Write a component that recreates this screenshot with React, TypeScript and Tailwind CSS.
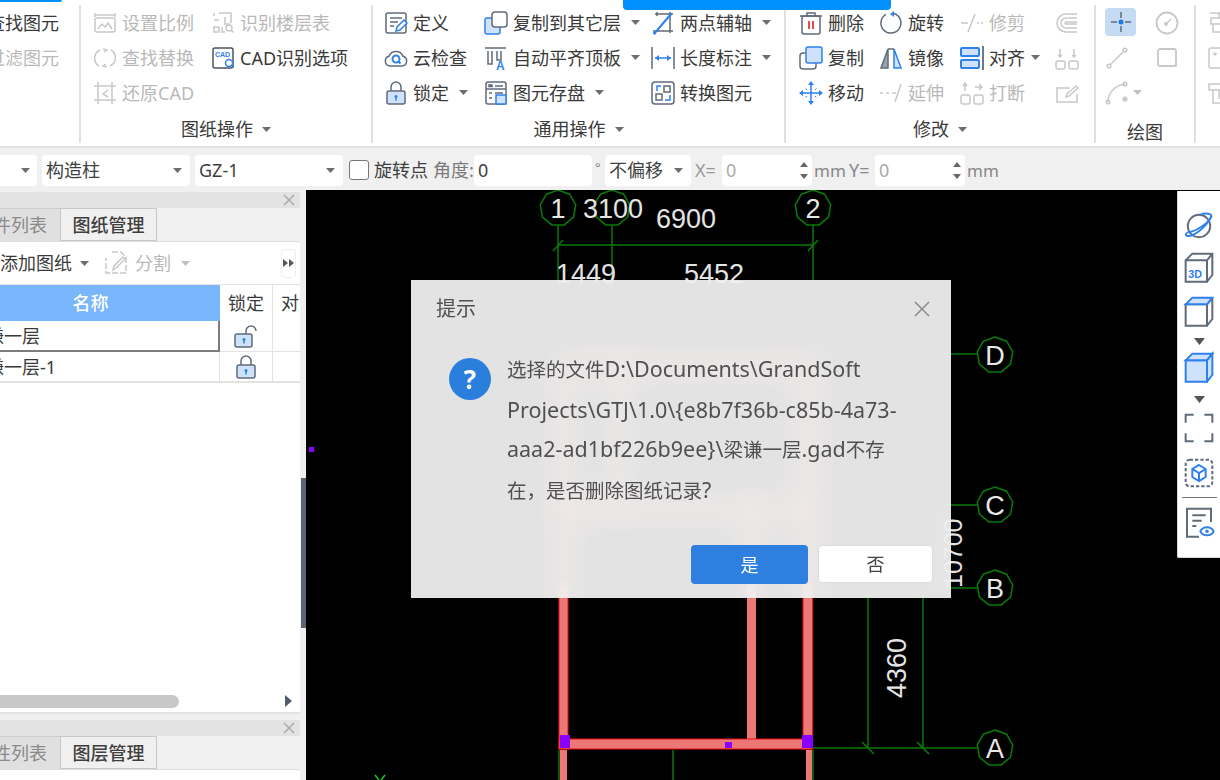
import type { ReactNode } from "react"

const G = "#5f6b7a"
const B = "#2f80ed"
const L = "#cfe2fb"
const D = "#c8c8c8"

function Ico({ children, size = 24 }: { children: ReactNode; size?: number }) {
  return (
    <svg viewBox="0 0 24 24" width={size} height={size} fill="none" stroke={G} strokeWidth={1.5} className="shrink-0">
      {children}
    </svg>
  )
}

function Caret({ muted }: { muted?: boolean }) {
  return (
    <svg width="9" height="5" viewBox="0 0 9 5" className="shrink-0">
      <path d="M0 0h9L4.5 5z" fill={muted ? "#c0c0c0" : "#6d6d6d"} />
    </svg>
  )
}

function Tool({ icon, label, caret, off, gap }: { icon?: ReactNode; label?: string; caret?: boolean; off?: boolean; gap?: string }) {
  return (
    <div className={`flex items-center h-[35px] gap-[5px] whitespace-nowrap ${off ? "text-[#b9b9b9]" : "text-[#3a3a3a]"}`}>
      {icon}
      {label && <span>{label}</span>}
      {caret && <span className={gap ?? "ml-[5px]"}><Caret muted={off} /></span>}
    </div>
  )
}

const icons = {
  scale: (
    <Ico><g stroke={D}><path d="M2 2v4M22 2v4M2 4h20" /><rect x="2" y="7" width="20" height="14" rx="2" /><path d="M5 18l4-5 3 3 3-4 4 6" /></g></Ico>
  ),
  floors: (
    <Ico><g stroke={D}><path d="M3 2v3M8 2h12v10M3 9h5M3 16v5h5v-5zM11 16v5h3M14 6v7h5" /><circle cx="18" cy="17" r="3" /><path d="M20 19l2.500 2.500" /></g></Ico>
  ),
  replace: (
    <Ico><g stroke={D}><path d="M7 4a9 9 0 0 0-1 16M17 20a9 9 0 0 0 1-16" /><path d="M10 3l4 1-3 2M14 21l-4-1 3-2" /></g></Ico>
  ),
  cadOpt: (
    <Ico>
      <rect x="2" y="2" width="20" height="20" rx="2" stroke="#4a5563" />
      <text x="4" y="11" fontSize="7" fontWeight="700" fill={B} stroke="none" fontFamily="Liberation Sans">CAD</text>
      <circle cx="18" cy="17" r="3.500" stroke={B} fill="#fff" />
      <path d="M20.500 19.500l2 2" stroke={B} />
    </Ico>
  ),
  restore: (
    <Ico><g stroke={D}><path d="M5 1v22M19 1v22M1 5h22M1 19h22" /><path d="M15 9l-5 4 5 3" /></g></Ico>
  ),
  define: (
    <Ico>
      <rect x="2" y="2" width="20" height="20" rx="2" />
      <path d="M6 7h12M6 11h8M6 15h4" />
      <path d="M12 20l1-4 7-7 3 3-7 7z" fill="#fff" stroke={B} />
    </Ico>
  ),
  copyTo: (
    <Ico>
      <rect x="1" y="7" width="15" height="16" rx="2" fill={L} stroke={B} />
      <rect x="8" y="1" width="15" height="15" rx="3" fill="#fff" />
    </Ico>
  ),
  twoAxis: (
    <Ico>
      <path d="M4 3h18M2 20h20M6 1v4M19 1v21" />
      <path d="M3 23L20 3" stroke={B} strokeWidth={2} />
      <circle cx="3.500" cy="22" r="1.500" fill={B} stroke="none" />
      <circle cx="19.500" cy="3" r="1.500" fill={B} stroke="none" />
    </Ico>
  ),
  cloud: (
    <Ico>
      <path d="M6 20a5 5 0 0 1-1-9.800 7.500 7.500 0 0 1 14 0A5 5 0 0 1 18 20z" />
      <circle cx="12" cy="13" r="3.500" stroke={B} strokeWidth={2} />
      <path d="M14.500 15.500l2 2" stroke={B} strokeWidth={2} />
    </Ico>
  ),
  autoAlign: (
    <Ico>
      <path d="M1 2h21M4 5v13h4V5M13 5v9h4V5" />
      <text x="12" y="24" fontSize="12" fontWeight="700" fill={B} stroke="none" fontFamily="Liberation Sans">A</text>
    </Ico>
  ),
  length: (
    <Ico>
      <path d="M1 1v22M23 1v22" />
      <path d="M4 12h16" stroke={B} />
      <path d="M4 12l4-3v6zM20 12l-4-3v6z" fill={B} stroke="none" />
    </Ico>
  ),
  lock: (
    <Ico>
      <path d="M7 10V6a5 5 0 0 1 10 0v4" />
      <rect x="3" y="10" width="18" height="13" rx="2" fill={L} />
      <circle cx="12" cy="15.500" r="1.500" fill={B} stroke="none" />
      <path d="M12 16v3.500" stroke={B} />
    </Ico>
  ),
  unlock: (
    <Ico>
      <path d="M13 10V7a5 5 0 0 1 10 0" transform="translate(-1 0)" />
      <rect x="1" y="10" width="17" height="13" rx="2" fill={L} />
      <circle cx="10" cy="15.500" r="1.500" fill={B} stroke="none" />
      <path d="M10 16v3.500" stroke={B} />
    </Ico>
  ),
  save: (
    <Ico>
      <rect x="2" y="1" width="20" height="22" rx="2" />
      <path d="M2 8h20" />
      <rect x="5" y="4" width="3" height="1.500" /><path d="M11 5h8M5 12h3M5 17h3M11 12h8" />
      <rect x="12" y="14" width="10" height="9" fill={L} stroke={B} />
    </Ico>
  ),
  convert: (
    <Ico>
      <rect x="1" y="1" width="22" height="22" rx="3" />
      <rect x="5" y="13" width="6" height="6" /><rect x="13" y="5" width="6" height="6" />
      <path d="M10 5H6v5M14 19h5v-5" stroke={B} />
    </Ico>
  ),
  del: (
    <Ico>
      <path d="M1 5h22M8 5V2h8v3" />
      <rect x="3" y="5" width="18" height="18" rx="2" />
      <path d="M10 10v8M14 10v8" stroke="#e53935" strokeWidth={1.800} />
    </Ico>
  ),
  rotate: (
    <Ico>
      <path d="M15 2.500A10 10 0 1 1 7 3.300" />
      <path d="M15 0v6l-4-3z" fill={B} stroke="none" />
    </Ico>
  ),
  trim: (
    <Ico><g stroke={D}><path d="M1 12h7M8 21L15 3M17 12h2M21 12h2" /></g></Ico>
  ),
  offset: (
    <Ico><g stroke={D}><path d="M22 3H11a9 9 0 0 0 0 18h11M22 7H11a5 5 0 0 0 0 10h11M22 11H11a1 1 0 0 0 0 2h11" /></g></Ico>
  ),
  copy: (
    <Ico>
      <rect x="1" y="7" width="16" height="16" rx="3" />
      <rect x="7" y="1" width="16" height="16" rx="2" fill={L} stroke={B} />
    </Ico>
  ),
  mirror: (
    <Ico>
      <path d="M9 3L2 22h7z" fill="#9aa4b0" />
      <path d="M15 3l7 19h-7z" fill={L} stroke={B} />
      <path d="M9 3h6" />
    </Ico>
  ),
  align: (
    <Ico>
      <rect x="1" y="2" width="18" height="8" rx="1" fill={L} stroke={B} strokeWidth={2} />
      <rect x="1" y="14" width="18" height="8" rx="1" fill={L} stroke={B} strokeWidth={2} />
      <path d="M23 0v24" strokeWidth={1.800} />
    </Ico>
  ),
  merge: (
    <Ico><g stroke={D}><rect x="1" y="15" width="9" height="8" rx="2" /><rect x="14" y="15" width="9" height="8" rx="2" /><path d="M5 3v8M3 9l2 2 2-2M19 3v8M17 9l2 2 2-2" /></g></Ico>
  ),
  move: (
    <Ico>
      <path d="M12 3v18M3 12h18" stroke={B} />
      <path d="M12 0l3 4H9zM12 24l3-4H9zM0 12l4-3v6zM24 12l-4-3v6z" fill={B} stroke="none" />
      <path d="M8 9L6 7M16 9l2-2M8 15l-2 2M16 15l2 2" stroke={B} strokeWidth={1} strokeDasharray="2 1" />
    </Ico>
  ),
  extend: (
    <Ico><g stroke={D}><path d="M1 12h3M7 12h3M13 12h4M16 21L22 3" /></g></Ico>
  ),
  breakIcon: (
    <Ico><g stroke={D}><rect x="1" y="14" width="9" height="9" rx="2" /><rect x="14" y="14" width="9" height="9" rx="2" /><path d="M5 2v8M3 5l2-3 2 3M15 6h7M19 3l3 3-3 3" /></g></Ico>
  ),
  edit: (
    <Ico><g stroke={D}><path d="M22 13v8H2V7h13" /><path d="M11 16l1-3 9-8 2 2-9 8z" /></g></Ico>
  ),
  snap: (
    <Ico>
      <path d="M12 2v6M12 16v6M2 12h6M16 12h6" />
      <circle cx="12" cy="12" r="2.500" fill="#2277e6" stroke="none" />
    </Ico>
  ),
  gauge: (
    <Ico><g stroke={D}><circle cx="12" cy="12" r="10.500" strokeWidth={1.800} /><path d="M11 13l5-5" /><circle cx="11" cy="13" r="1.200" fill={D} /></g></Ico>
  ),
  line: (
    <Ico><g stroke={D}><path d="M5 19L19 5" /><circle cx="4" cy="20" r="1.800" /><circle cx="20" cy="4" r="1.800" /></g></Ico>
  ),
  rect: (
    <Ico><g stroke={D}><rect x="3" y="3" width="18" height="17" rx="2" strokeWidth={1.800} /><path d="M19 20h2v-2" /></g></Ico>
  ),
  arc: (
    <Ico><g stroke={D}><path d="M3 21C3 12 10 4 20 3" /><circle cx="3" cy="21" r="1.800" /><circle cx="20" cy="3" r="1.800" /><circle cx="20" cy="18" r="1.800" fill={D} /></g></Ico>
  ),
  side1: (
    <Ico><g stroke={D}><path d="M3 2h18M12 2v5M4 7h16v6H4zM6 13v8h12v-8" /></g></Ico>
  ),
  side2: (
    <Ico><g stroke={D}><rect x="2" y="2" width="20" height="20" rx="2" /><circle cx="8" cy="8" r="1" /><circle cx="17" cy="17" r="1" /></g></Ico>
  ),
  side3: (
    <Ico><g stroke={D}><path d="M2 3h20v6H2zM6 9v13h12M12 9v9" /></g></Ico>
  ),
}

function Group({ title, width, className, children, shift }: { title?: string; width: string; className?: string; children: ReactNode; shift?: boolean }) {
  return (
    <div className={`${width} shrink-0 flex flex-col mt-[5px] mb-[3px] border-r-2 border-[#e0e0e0] overflow-hidden`}>
      <div className={`h-[105px] ${className ?? ""}`}>{children}</div>
      {title && (
        <div className={`flex items-center justify-center gap-[9px] text-[#3a3a3a] ${shift ? "mt-[13px]" : "mt-[10px]"}`}>
          <span>{title}</span>
          {!shift && <Caret />}
        </div>
      )}
    </div>
  )
}

function Ribbon() {
  return (
    <div className="h-[148px] bg-white flex border-b-2 border-[#e3e3e3] text-[18px] leading-none">
      <Group width="w-[81px]" className="flex flex-col items-end pr-[20px]">
        <Tool label="查找图元" />
        <Tool label="过滤图元" off />
      </Group>
      <Group title="图纸操作" width="w-[292px]" className="pl-[12px] grid grid-cols-[118px_1fr] grid-rows-[35px_35px_35px]">
        <Tool icon={icons.scale} label="设置比例" off />
        <Tool icon={icons.floors} label="识别楼层表" off />
        <Tool icon={icons.replace} label="查找替换" off />
        <Tool icon={icons.cadOpt} label="CAD识别选项" />
        <Tool icon={icons.restore} label="还原CAD" off />
      </Group>
      <Group title="通用操作" width="w-[413px]" className="pl-[11px] grid grid-cols-[100px_167px_1fr] grid-rows-[35px_35px_35px]">
        <Tool icon={icons.define} label="定义" />
        <Tool icon={icons.copyTo} label="复制到其它层" caret />
        <Tool icon={icons.twoAxis} label="两点辅轴" caret />
        <Tool icon={icons.cloud} label="云检查" />
        <Tool icon={icons.autoAlign} label="自动平齐顶板" caret />
        <Tool icon={icons.length} label="长度标注" caret />
        <Tool icon={icons.lock} label="锁定" caret />
        <Tool icon={icons.save} label="图元存盘" caret />
        <Tool icon={icons.convert} label="转换图元" />
      </Group>
      <Group title="修改" width="w-[310px]" className="pl-[13px] grid grid-cols-[80px_81px_95px_1fr] grid-rows-[35px_35px_35px]">
        <Tool icon={icons.del} label="删除" />
        <Tool icon={icons.rotate} label="旋转" />
        <Tool icon={icons.trim} label="修剪" off />
        <Tool icon={icons.offset} off />
        <Tool icon={icons.copy} label="复制" />
        <Tool icon={icons.mirror} label="镜像" />
        <Tool icon={icons.align} label="对齐" caret gap="ml-[1px]" />
        <Tool icon={icons.merge} off />
        <Tool icon={icons.move} label="移动" />
        <Tool icon={icons.extend} label="延伸" off />
        <Tool icon={icons.breakIcon} label="打断" off />
        <Tool icon={icons.edit} off />
      </Group>
      <Group title="绘图" shift width="w-[100px]" className="pl-[9px] grid grid-cols-[50px_1fr] grid-rows-[35px_35px_35px]">
        <div className="w-[31px] h-[28px] mt-[3px] rounded-[4px] bg-[#c4dbf3] flex items-center justify-center">{icons.snap}</div>
        <Tool icon={icons.gauge} />
        <Tool icon={icons.line} />
        <Tool icon={icons.rect} />
        <Tool icon={icons.arc} caret gap="-ml-[1px]" off />
      </Group>
      <div className="pl-[11px] pt-[5px] flex flex-col">
        <Tool icon={icons.side1} />
        <Tool icon={icons.side2} />
        <Tool icon={icons.side3} />
      </div>
    </div>
  )
}

function Field({ className, children }: { className: string; children?: ReactNode }) {
  return <div className={`h-[31px] bg-white rounded-[4px] flex items-center px-[4px] shrink-0 ${className}`}>{children}</div>
}

function Spin() {
  return (
    <div className="ml-auto flex flex-col gap-[7px]">
      <svg width="8" height="5"><path d="M0 5h8L4 0z" fill="#666" /></svg>
      <svg width="8" height="5"><path d="M0 0h8L4 5z" fill="#666" /></svg>
    </div>
  )
}

function OptionBar() {
  return (
    <div className="h-[42px] bg-[#f0f0f0] flex items-center text-[18px] text-[#3f3f3f] leading-none -ml-[6px] pt-[2px]">
      <Field className="w-[43px] justify-end pr-[7px] ml-0"><Caret /></Field>
      <Field className="w-[148px] ml-[5px] justify-between pr-[8px]"><span>构造柱</span><Caret /></Field>
      <Field className="w-[148px] ml-[5px] justify-between pr-[8px]"><span>GZ-1</span><Caret /></Field>
      <div className="w-[20px] h-[20px] ml-[6px] bg-white border border-[#777] rounded-[3px] shrink-0" />
      <span className="ml-[5px] w-[55px] whitespace-nowrap">旋转点</span>
      <span className="ml-[4px] w-[40px] whitespace-nowrap text-[#7a7a7a]">角度:</span>
      <Field className="w-[118px] ml-[1px]">0</Field>
      <span className="ml-[3px] text-[#888] text-[13px] -mt-[6px] w-[10px]">°</span>
      <Field className="w-[86px] justify-between pr-[8px]"><span>不偏移</span><Caret /></Field>
      <span className="w-[31px] pl-[4px] whitespace-nowrap text-[#999]">X=</span>
      <Field className="w-[90px] text-[#aaa]">0<Spin /></Field>
      <span className="w-[37px] pl-[2px] text-[17px] whitespace-nowrap text-[#888]">mm</span>
      <span className="w-[26px] whitespace-nowrap text-[#888]">Y=</span>
      <Field className="w-[90px] text-[#aaa]">0<Spin /></Field>
      <span className="ml-[2px] text-[17px] text-[#888]">mm</span>
    </div>
  )
}

function PanelHead({ first, second }: { first: string; second: string }) {
  return (
    <>
      <div className="h-[16px] bg-[#e3e3e3] flex items-center justify-end pr-[4px] shrink-0">
        <svg width="14" height="14" viewBox="0 0 14 14"><path d="M2 2l10 10M12 2L2 12" stroke="#aaa" strokeWidth="1.500" /></svg>
      </div>
      <div className="h-[34px] bg-[#f0f0f0] flex border-b border-[#ddd] shrink-0 text-[18px] leading-none">
        <div className="w-[60px] bg-[#e0e0e0] border-t border-[#ccc] flex items-center justify-end pr-[13px] text-[#8a8a8a] whitespace-nowrap overflow-hidden">{first}</div>
        <div className="w-[97px] bg-[#f0f0f0] border border-[#c8c8c8] flex items-center justify-center font-medium text-[#3f3f3f]">{second}</div>
      </div>
    </>
  )
}

function LeftPanel() {
  return (
    <div className="w-[306px] shrink-0 flex flex-col bg-[#f0f0f0] relative">
      <div className="h-[522px] w-[300px] bg-white flex flex-col mt-[2px] border-b-2 border-[#e3e3e3] text-[18px] leading-none shrink-0">
        <PanelHead first="构件列表" second="图纸管理" />
        <div className="h-[42px] flex items-center shrink-0 text-[#3a3a3a] pr-[4px]">
          <span className="whitespace-nowrap">添加图纸</span>
          <span className="ml-[8px]"><Caret /></span>
          <span className="ml-[15px]">
            <Ico><g stroke={D}><path d="M8 1h9l5 5v16H2V7" strokeDasharray="6 2" /><path d="M9 19l1-4 9-9 2 2-9 9z" /></g></Ico>
          </span>
          <span className="ml-[7px] text-[#b9b9b9]">分割</span>
          <span className="ml-[10px]"><Caret muted /></span>
          <div className="ml-auto w-[15px] h-[29px] border border-[#eee] rounded-[4px] flex items-center justify-center">
            <svg width="11" height="8" viewBox="0 0 11 8"><path d="M0 0l5 4-5 4zM6 0l5 4-5 4z" fill="#555" /></svg>
          </div>
        </div>
        <div className="grid grid-cols-[220px_53px_1fr] border-t border-[#e3e3e3] shrink-0">
          <div className="h-[36px] bg-[#79b6fb] flex items-center justify-center text-white pr-[39px] font-medium">名称</div>
          <div className="h-[36px] flex items-center justify-center border-r border-[#e3e3e3] text-[#3a3a3a]">锁定</div>
          <div className="h-[36px] flex items-center pl-[8px] text-[#3a3a3a] overflow-hidden whitespace-nowrap">对</div>
          <div className="h-[31px] border-r-2 border-b-2 border-[#7d7d7d] flex items-center whitespace-nowrap text-[#3a3a3a] overflow-hidden"><span className="-ml-[32px]">梁谦一层</span></div>
          <div className="h-[31px] border-b border-r border-[#e3e3e3] flex items-center justify-center">{icons.unlock}</div>
          <div className="h-[31px] border-b border-[#e3e3e3]" />
          <div className="h-[31px] border-r border-b-2 border-[#e3e3e3] flex items-center whitespace-nowrap text-[#3a3a3a] overflow-hidden"><span className="-ml-[32px]">梁谦一层-1</span></div>
          <div className="h-[31px] border-b-2 border-r border-[#e3e3e3] flex items-center justify-center">{icons.lock}</div>
          <div className="h-[31px] border-b-2 border-[#e3e3e3]" />
        </div>
        <div className="mt-auto h-[14px] mb-[4px] flex items-center">
          <div className="w-[179px] h-[13px] bg-[#c8c8c8] rounded-r-full" />
          <svg width="7" height="12" viewBox="0 0 7 12" className="ml-auto mr-[8px]"><path d="M0 0l7 6-7 6z" fill="#525c6e" /></svg>
        </div>
      </div>
      <div className="mt-[6px] w-[300px] flex-1 bg-white flex flex-col">
        <PanelHead first="属性列表" second="图层管理" />
      </div>
      <div className="absolute right-0 top-[288px] w-[5px] h-[150px] bg-[#5d6570]" />
    </div>
  )
}

function Octagon({ x, y, t }: { x: number; y: number; t?: string }) {
  const r = 18
  const pts = [0, 1, 2, 3, 4, 5, 6, 7, 8]
    .map((i) => {
      const a = (Math.PI / 4.5) * i - Math.PI / 2
      return `${x + r * Math.cos(a)},${y + r * Math.sin(a)}`
    })
    .join(" ")
  return (
    <g>
      <polygon points={pts} fill="#000" stroke="#0a7a0a" strokeWidth="1.500" />
      {t && <text x={x} y={y + 10} textAnchor="middle" fontSize="27" fill="#e8e8e8" stroke="none" fontFamily="Liberation Sans">{t}</text>}
    </g>
  )
}

function Drawing() {
  const wall = "#ed7676"
  const green = "#0a7a0a"
  return (
    <svg viewBox="306 190 914 590" width="914" height="590" className="block">
      <rect x="306" y="190" width="914" height="590" fill="#000" />
      <g stroke={green} strokeWidth="1.500" fill="none">
        <path d="M558 208V300M612 208V300M813 208V300" />
        <path d="M558 245H813M553 251l10-11M808 251l10-11" />
        <path d="M800 354H977M800 505H977M800 588H977M812 748H977" />
        <path d="M868 590V748M923 590V748M862 742l12 12M917 742l12 12" />
        <path d="M673 750V780" />
        <path d="M559 750V780M813 750V780" />
      </g>
      <Octagon x={558} y={208} t="1" />
      <Octagon x={612} y={208} />
      <Octagon x={813} y={208} t="2" />
      <Octagon x={995} y={355} t="D" />
      <Octagon x={995} y={505} t="C" />
      <Octagon x={995} y={588} t="B" />
      <Octagon x={995} y={748} t="A" />
      <g fill="#e4e4e4" fontSize="27" fontFamily="Liberation Sans" stroke="none">
        <text x="583" y="218">3100</text>
        <text x="656" y="228">6900</text>
        <text x="556" y="283">1449</text>
        <text x="684" y="283">5452</text>
        <text transform="translate(906 698) rotate(-90)">4360</text>
        <text transform="translate(962 588) rotate(-90)" fontSize="25">10700</text>
      </g>
      {/* walls, continuing under the dialog so its backdrop picks them up */}
      <g fill={wall} stroke="#f01010" strokeWidth="1">
        <rect x="559" y="360" width="9" height="389" />
        <rect x="803" y="360" width="9.500" height="389" />
        <rect x="747" y="500" width="9" height="240" stroke="none" />
        <rect x="559" y="739" width="253" height="10" />
      </g>
      <g fill={wall}>
        <rect x="559" y="360" width="253" height="10" />
        <rect x="559" y="505" width="253" height="9" />
        <rect x="615" y="360" width="8" height="150" />
        <rect x="560" y="750" width="7" height="30" />
        <rect x="806" y="750" width="6" height="30" />
      </g>
      <g fill="#8a00ff">
        <rect x="560" y="735" width="10" height="13" />
        <rect x="802" y="735" width="11" height="13" />
        <rect x="725" y="742" width="7" height="6" />
        <rect x="309" y="447" width="5" height="5" />
      </g>
      <path d="M375 775l4 5M385 775l-4 5" stroke="#19c819" strokeWidth="1.500" />
    </svg>
  )
}

function SideBar() {
  return (
    <div className="absolute right-0 top-[1px] w-[43px] h-[367px] bg-white border-l border-b border-[#d8d8d8] rounded-bl-[2px] flex flex-col items-center">
      <div className="mt-[20px]">
        <Ico size={30}><ellipse cx="12" cy="12" rx="9" ry="9" /><path d="M3 17C8 17 20 10 22 4c-1-3-7-2-9-1" stroke={B} /><path d="M3 17c-2 1-2 3 0 3 5 0 14-6 19-16" stroke={B} /></Ico>
      </div>
      <div className="mt-[10px]">
        <Ico size={32}><path d="M2 7h16v16H2zM2 7l5-5h15v16l-4 5M18 7l4-5" /><text x="4" y="20" fontSize="8" fontWeight="700" fill={B} stroke="none" fontFamily="Liberation Sans">3D</text></Ico>
      </div>
      <div className="mt-[12px]">
        <Ico size={32}><path d="M2 7h16v16H2zM18 23l4-5V2M18 7l4-5" /><path d="M2 7l5-5h15l-4 5z" fill={L} stroke={B} /></Ico>
      </div>
      <div className="mt-[11px]"><svg width="11" height="7"><path d="M0 0h11L5.500 7z" fill="#555" /></svg></div>
      <div className="mt-[6px]">
        <Ico size={32}><g stroke={B}><path d="M2 7h16v16H2z" fill={L} /><path d="M2 7l5-5h15l-4 5z" fill={L} /><path d="M18 7l4-5v16l-4 5z" fill={L} /></g></Ico>
      </div>
      <div className="mt-[13px]"><svg width="11" height="7"><path d="M0 0h11L5.500 7z" fill="#555" /></svg></div>
      <div className="mt-[9px]">
        <Ico size={32}><path d="M8 2H2v6M16 2h6v6M2 16v6h6M22 16v6h-6" /></Ico>
      </div>
      <div className="mt-[13px]">
        <Ico size={32}><rect x="2" y="2" width="20" height="20" rx="3" strokeDasharray="2.500 1.500" /><path d="M12 6l5 3v6l-5 3-5-3V9zM7 9l5 3 5-3M12 12v6" stroke={B} /></Ico>
      </div>
      <div className="mt-[8px] w-[35px] border-t border-[#777]" />
      <div className="mt-[8px]">
        <Ico size={32}><path d="M21 12V2H3v21h9" /><path d="M7 7h10M7 11h7M7 15h3" /><path d="M13 19c2-4 8-4 10 0-2 4-8 4-10 0z" stroke={B} /><circle cx="18" cy="19" r="1.300" fill={B} stroke="none" /></Ico>
      </div>
    </div>
  )
}

function Cjk({ children }: { children: ReactNode }) {
  return <span className="text-[19.500px]">{children}</span>
}

function Dialog() {
  return (
    <div className="absolute left-[411px] top-[280px] w-[540px] h-[318px] bg-white/[0.89] backdrop-blur-[14px] flex flex-col text-[#505050] font-normal leading-none">
      <div className="h-[58px] flex items-center justify-between pl-[25px] pr-[20px] text-[20px]">
        <span>提示</span>
        <svg width="18" height="18" viewBox="0 0 18 18"><path d="M2 2l14 14M16 2L2 16" stroke="#8a8a8a" strokeWidth="1.500" /></svg>
      </div>
      <div className="flex pl-[38px] pt-[11px] gap-[16px] flex-1">
        <div className="w-[42px] h-[42px] mt-[9px] rounded-full bg-[#2a7fdc] flex items-center justify-center text-white text-[26px] font-bold shrink-0">?</div>
        <p className="w-[420px] text-[21.500px] leading-[39.500px] whitespace-nowrap">
          <Cjk>选择的文件</Cjk>D:\Documents\GrandSoft
          <br />
          Projects\GTJ\1.0\{"{"}e8b7f36b-c85b-4a73-
          <br />
          aaa2-ad1bf226b9ee{"}"}\<Cjk>梁谦一层</Cjk>.gad<Cjk>不存</Cjk>
          <br />
          <Cjk>在，是否删除图纸记录</Cjk>?
        </p>
      </div>
      <div className="flex justify-end gap-[10px] pr-[18px] pb-[14px] text-[18px]">
        <button className="w-[117px] h-[39px] rounded-[4px] bg-[#2e7fe0] text-white">是</button>
        <button className="w-[115px] h-[38px] rounded-[4px] bg-white border border-[#ddd] text-[#444]">否</button>
      </div>
    </div>
  )
}

export default function App() {
  return (
    <div className="w-[1220px] h-[780px] relative overflow-hidden bg-white font-['Noto_Sans','Noto_Sans_CJK_SC',sans-serif]">
      <Ribbon />
      <OptionBar />
      <div className="flex h-[590px]">
        <LeftPanel />
        <div className="flex-1 relative overflow-hidden">
          <Drawing />
          <SideBar />
        </div>
      </div>
      <Dialog />
      <div className="absolute left-0 top-0 w-[62px] h-[2px] bg-[#0090ff] rounded-br-[2px]" />
      <div className="absolute left-[623px] top-0 w-[268px] h-[10px] bg-[#0090ff] rounded-b-[4px]" />
    </div>
  )
}
